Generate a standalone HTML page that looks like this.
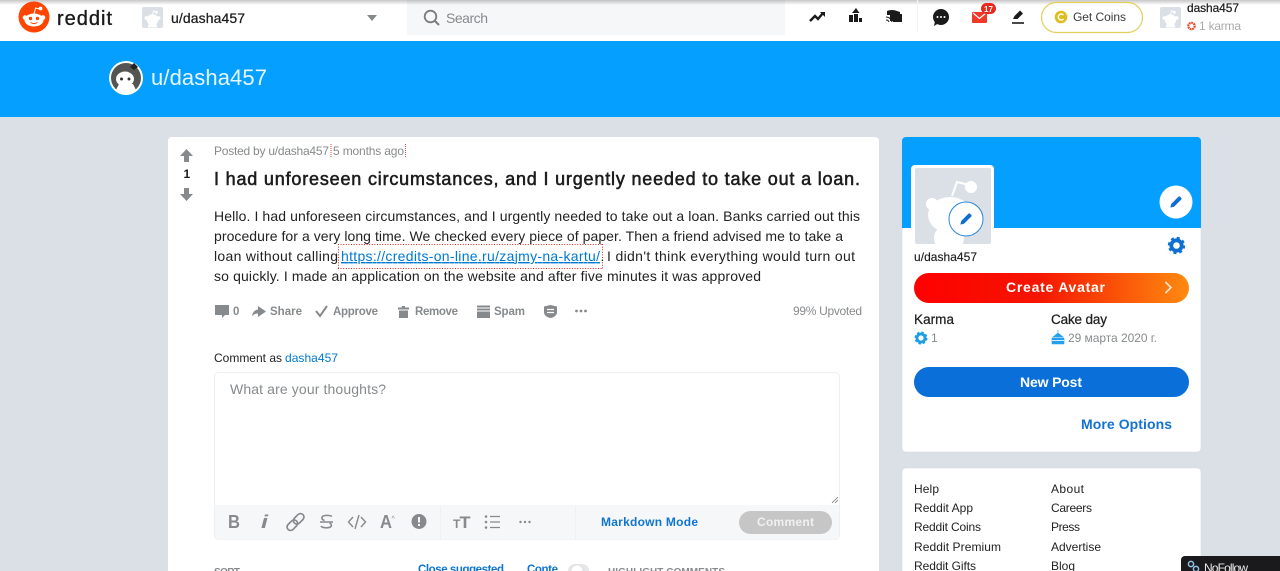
<!DOCTYPE html>
<html lang="en"><head><meta charset="utf-8"><title>u/dasha457</title>
<style>
html,body{margin:0;padding:0;width:1280px;height:571px;overflow:hidden;background:#dae0e6}
svg{display:block}
text{font-family:"Liberation Sans","Noto Sans CJK SC",sans-serif;font-size:12px;fill:#1c1c1c}
.b{font-size:14px;fill:#222}
.g{fill:#878a8c}
.a{font-weight:700;font-size:11.5px;fill:#878a8c}
.l{fill:#222}
.m{stroke:#222;stroke-width:.25}
</style></head><body>
<svg xmlns="http://www.w3.org/2000/svg" width="1280" height="571" viewBox="0 0 1280 571">
<defs>
<linearGradient id="top" x1="0" y1="0" x2="0" y2="1"><stop offset="0" stop-color="#000" stop-opacity=".22"/><stop offset="1" stop-color="#000" stop-opacity="0"/></linearGradient>
<linearGradient id="av" x1="0" y1="0" x2="1" y2="0"><stop offset="0" stop-color="#f00"/><stop offset=".45" stop-color="#f51500"/><stop offset="1" stop-color="#ff8a10"/></linearGradient>
<symbol id="snoo" viewBox="0 0 20 20"><g fill="#fff"><circle cx="10" cy="12" r="6"/><circle cx="3.6" cy="10" r="2"/><circle cx="16.4" cy="10" r="2"/><circle cx="14" cy="4" r="1.6"/><path d="M10 7 11 2.6 14 3.6" fill="none" stroke="#fff" stroke-width=".9"/><path d="M5 21C5 16 7 15 10 15s5 1 5 6z"/></g></symbol>
<symbol id="pen" viewBox="0 0 20 20"><path d="M3 17l1-4.500L13 3.500a1.500 1.500 0 0 1 2.100 0l1.400 1.400a1.500 1.500 0 0 1 0 2.100L7.500 16z" fill="#0f6fd0"/></symbol>
</defs>

<rect width="1280" height="571" fill="#dae0e6"/>

<!-- nav -->
<rect width="1280" height="41" fill="#fff"/>
<rect x="407" y="0" width="378" height="35" fill="#f6f7f8"/>
<rect width="1280" height="5" fill="url(#top)"/>
<circle cx="34" cy="17" r="15.500" fill="#ff4500"/>
<g fill="#fff">
<ellipse cx="34" cy="20" rx="9.500" ry="6.500"/><circle cx="25" cy="17.500" r="2.300"/><circle cx="43" cy="17.500" r="2.300"/><circle cx="40.500" cy="8.500" r="1.900"/>
<path d="M34 14l1.600-6 4 1" fill="none" stroke="#fff" stroke-width="1"/>
</g>
<circle cx="30.500" cy="18.500" r="1.700" fill="#ff4500"/><circle cx="37.500" cy="18.500" r="1.700" fill="#ff4500"/>
<path d="M30.500 22.500q3.500 2.300 7 0" fill="none" stroke="#ff4500" stroke-width="1"/>
<text x="57" y="25" textLength="55" lengthAdjust="spacing" style="font-size:20px;fill:#1a1a1b" stroke="#1a1a1b" stroke-width=".35">reddit</text>

<rect x="142" y="7" width="21" height="21" rx="2" fill="#dae0e6"/>
<svg x="143" y="8" width="19" height="20" viewBox="0 0 20 20"><use href="#snoo"/></svg>
<text x="171" y="23" textLength="74" lengthAdjust="spacing" class="m" style="font-size:14px">u/dasha457</text>
<path d="M367 15h10l-5 6z" fill="#878a8c"/>

<circle cx="430.500" cy="16.500" r="5.800" fill="none" stroke="#7c7c7c" stroke-width="1.800"/><path d="M435 21l4 4" stroke="#7c7c7c" stroke-width="2"/>
<text x="446" y="23" textLength="42" lengthAdjust="spacing" class="b" style="fill:#878a8c">Search</text>

<path d="M810 21l5-5 3 3 5-6" fill="none" stroke="#1a1a1b" stroke-width="2.400"/><path d="M820 12h5v5z" fill="#1a1a1b"/>
<path d="M849 15h4v7h-4zM854 14v8h4v-8zM859 18h3v4h-3zM852 13l4-5 3.500 5z" fill="#1a1a1b"/>
<path d="M887 11q5-2 10 0l3 1v9h-10v-6h-3z" fill="#1a1a1b"/><rect x="893" y="14" width="9" height="8" fill="#1a1a1b"/><path d="M886 17a6 6 0 0 1 6 5M886 20a3 3 0 0 1 3 2" fill="none" stroke="#1a1a1b" stroke-width="1"/>
<rect x="917" y="0" width="1" height="32" fill="#f3f4f5"/>
<circle cx="941" cy="17" r="8" fill="#1a1a1b"/><path d="M935 21l-1 5 5-3z" fill="#1a1a1b"/><circle cx="937.500" cy="17" r="1" fill="#fff"/><circle cx="941" cy="17" r="1" fill="#fff"/><circle cx="944.500" cy="17" r="1" fill="#fff"/>
<rect x="972" y="12" width="15" height="11" rx="1" fill="#ef3a2a"/><path d="M973 13l6.500 5.500L986 13" fill="none" stroke="#fff" stroke-width="1.200"/>
<rect x="981" y="3" width="15" height="11" rx="5.500" fill="#e8291c"/><text x="984" y="12" textLength="9" lengthAdjust="spacing" style="font-size:8px;fill:#fff;font-weight:700">17</text>
<path d="M1013 19l1.500-3 5.500-5.500 3 3-5.500 5.500z" fill="#1a1a1b"/><path d="M1012 23h12" stroke="#1a1a1b" stroke-width="1.600"/>
<rect x="1041.500" y="2.500" width="101" height="30" rx="15" fill="#fff" stroke="#e2cf5a" stroke-width="1.200"/>
<circle cx="1061" cy="17" r="6.300" fill="#dfbd1f"/><path d="M1063.500 15a3 3 0 1 0 0 4" fill="none" stroke="#fff" stroke-width="1.400"/>
<text x="1073" y="21" textLength="53" lengthAdjust="spacing" style="fill:#3a3a3a">Get Coins</text>
<rect x="1160" y="7" width="21" height="21" rx="2" fill="#dae0e6"/>
<svg x="1161" y="8" width="19" height="20" viewBox="0 0 20 20"><use href="#snoo"/></svg>
<text x="1187" y="12" textLength="52" lengthAdjust="spacing" class="m">dasha457</text>
<circle cx="1191.500" cy="26" r="3.200" fill="none" stroke="#e8492f" stroke-width="2.200" stroke-dasharray="1.800 .6"/>
<text x="1199" y="30" textLength="42" lengthAdjust="spacing" style="fill:#a8aaab">1 karma</text>

<!-- blue banner -->
<rect y="41" width="1280" height="76" fill="#049fff"/>
<circle cx="126" cy="78" r="17" fill="#fff"/>
<circle cx="126" cy="78" r="15" fill="#545452"/>
<path d="M116 90c2 2 6 3.500 10 3.500s8-1.500 10-3.500l-3-6h-14z" fill="#fff"/>
<ellipse cx="125" cy="79" rx="9" ry="7.500" fill="#fff"/><circle cx="121.500" cy="79" r="1.500" fill="#333"/><circle cx="129" cy="79" r="1.500" fill="#333"/>
<path d="M130 67l4-4 4 4-4 3z" fill="#222"/>
<text x="151" y="85" textLength="116" lengthAdjust="spacing" style="font-size:22px;fill:#e9f6ff">u/dasha457</text>

<!-- post card -->
<rect x="168" y="137" width="711" height="440" rx="4" fill="#fff"/>
<path d="M186.500 149l6.500 7h-4v6h-5v-6h-4z" fill="#878a8c"/>
<text x="183.500" y="178" textLength="6" lengthAdjust="spacing" style="font-weight:700;fill:#1a1a1b">1</text>
<path d="M186.500 201l6.500-7h-4v-6h-5v6h-4z" fill="#878a8c"/>

<text x="214" y="155" textLength="115" lengthAdjust="spacing" class="g">Posted by u/dasha457</text>
<path d="M331 144v14M405.500 144v14" stroke="#e24a3c" stroke-width="1" stroke-dasharray="1 1"/>
<text x="333" y="155" textLength="71" lengthAdjust="spacing" class="g">5 months ago</text>
<text x="214" y="185" textLength="646" lengthAdjust="spacing" style="font-size:18px;fill:#1c1c1c" stroke="#1c1c1c" stroke-width=".55">I had unforeseen circumstances, and I urgently needed to take out a loan.</text>

<text class="b" x="214" y="221" textLength="646" lengthAdjust="spacing">Hello. I had unforeseen circumstances, and I urgently needed to take out a loan. Banks carried out this</text>
<text class="b" x="214" y="241" textLength="629" lengthAdjust="spacing">procedure for a very long time. We checked every piece of paper. Then a friend advised me to take a</text>
<text class="b" x="214" y="261" textLength="124" lengthAdjust="spacing">loan without calling</text>
<text class="b" x="341" y="261" textLength="259" lengthAdjust="spacing" text-decoration="underline" style="fill:#0079d3">https://credits-on-line.ru/zajmy-na-kartu/</text>
<path d="M338 244.500h265M338 268.500h265M338.500 244v25M602.500 244v25" fill="none" stroke="#d8281c" stroke-width="1" stroke-dasharray="1 1.600"/>
<text class="b" x="600.500" y="261">.</text>
<text class="b" x="607" y="261" textLength="248" lengthAdjust="spacing">I didn't think everything would turn out</text>
<text class="b" x="214" y="281" textLength="547" lengthAdjust="spacing">so quickly. I made an application on the website and after five minutes it was approved</text>

<!-- actions -->
<path d="M215 305h14v10h-4l-3 3v-3h-7z" fill="#878a8c"/>
<text x="233" y="315" textLength="7" lengthAdjust="spacing" class="a">0</text>
<path d="M258 306l8 5.500-8 5.500v-3.500c-3 0-4.500 1-6 3 .5-4 2.500-6.500 6-7z" fill="#878a8c"/>
<text x="270" y="315" textLength="32" lengthAdjust="spacing" class="a">Share</text>
<path d="M316 311l4 5 7-10" fill="none" stroke="#878a8c" stroke-width="2"/>
<text x="333" y="315" textLength="45" lengthAdjust="spacing" class="a">Approve</text>
<path d="M398 307.500h11v2h-11zM399 310.500h9V318h-9zM402 306h3v1.500h-3z" fill="#878a8c"/>
<text x="415" y="315" textLength="43" lengthAdjust="spacing" class="a">Remove</text>
<path d="M477 305.500h13v2h-13zM477 308.500h13v2h-13zM477 311.500h13v6.500h-13z" fill="#878a8c"/>
<text x="494" y="315" textLength="31" lengthAdjust="spacing" class="a">Spam</text>
<path d="M544 306.500l6.500-1.500 6.500 1.500v6c0 3-3.500 5-6.500 5.500-3-.5-6.500-2.500-6.500-5.500z" fill="#878a8c"/><path d="M547 309.500h7M547 312.500h7" stroke="#fff" stroke-width="1.200"/>
<g fill="#878a8c"><circle cx="576.500" cy="311" r="1.400"/><circle cx="581" cy="311" r="1.400"/><circle cx="585.500" cy="311" r="1.400"/></g>
<text x="793" y="315" textLength="69" lengthAdjust="spacing" class="g">99% Upvoted</text>

<text x="214" y="362" textLength="68" lengthAdjust="spacing" style="fill:#222">Comment as</text>
<text x="285" y="362" textLength="53" lengthAdjust="spacing" style="fill:#0079d3">dasha457</text>

<!-- editor -->
<rect x="214.500" y="372.500" width="625" height="167" rx="4" fill="#fff" stroke="#edeff1"/>
<path d="M215 505h624v31a3.500 3.500 0 0 1-3.500 3.500h-617a3.500 3.500 0 0 1-3.500-3.500z" fill="#f6f7f8"/>
<text x="230" y="394" textLength="156" lengthAdjust="spacing" class="b" style="fill:#878a8c">What are your thoughts?</text>
<path d="M832 503l6-6M835 503l3-3" stroke="#777" stroke-width=".8"/>

<g fill="#878a8c" stroke="none">
<text x="228" y="528" style="font-size:18px;font-weight:700;fill:#878a8c" textLength="12" lengthAdjust="spacingAndGlyphs">B</text>
<text x="261" y="528" style="font-size:18px;font-weight:700;font-style:italic;fill:#878a8c" textLength="7" lengthAdjust="spacingAndGlyphs">i</text>
<g transform="rotate(-45 295.500 522)" fill="none" stroke="#878a8c" stroke-width="1.700"><rect x="285" y="518.500" width="12" height="7" rx="3.500"/><rect x="294" y="518.500" width="12" height="7" rx="3.500"/></g>
<path d="M320 522h13M332 516.500c-2-1.500-8-1.500-9.500 0-1.500 2 0 3.500 2 4M321 526c1 2 8 2.500 10 .5 1-1.500 0-3-1.500-3.500" fill="none" stroke="#878a8c" stroke-width="1.600"/>
<path d="M353 517l-4.500 5 4.500 5M361 517l4.500 5-4.500 5M359 515l-4 14" fill="none" stroke="#878a8c" stroke-width="1.400"/>
<text x="380" y="528" style="font-size:18px;font-weight:700;fill:#878a8c" textLength="12" lengthAdjust="spacingAndGlyphs">A</text>
<text x="391.500" y="521" style="font-size:7px;fill:#878a8c">^</text>
<circle cx="419" cy="521.500" r="7.500"/><path d="M418 517h2v5.500h-2zM418 524h2v2h-2z" fill="#f6f7f8"/>
<rect x="440" y="506" width="1" height="33" fill="#eff0f1"/>
<text x="453" y="528" style="font-size:12px;font-weight:700;fill:#878a8c">T</text>
<text x="459.500" y="528" style="font-size:17px;font-weight:700;fill:#878a8c" textLength="11" lengthAdjust="spacingAndGlyphs">T</text>
<circle cx="486" cy="516.500" r="1.300"/><circle cx="486" cy="522" r="1.300"/><circle cx="486" cy="527.500" r="1.300"/>
<path d="M490 516.500h10M490 522h10M490 527.500h10" stroke="#878a8c" stroke-width="1.300"/>
<circle cx="520.500" cy="522" r="1.200"/><circle cx="525" cy="522" r="1.200"/><circle cx="529.500" cy="522" r="1.200"/>
<rect x="575" y="506" width="1" height="33" fill="#eff0f1"/>
</g>
<text x="601" y="526" textLength="97" lengthAdjust="spacing" style="font-weight:700;fill:#0f75d0">Markdown Mode</text>
<rect x="739" y="511" width="93" height="23" rx="11.500" fill="#c6c6c6"/>
<text x="757" y="526" textLength="57" lengthAdjust="spacing" style="font-weight:700;fill:#f0f0f0">Comment</text>

<!-- bottom row -->
<text x="214" y="575" textLength="26" lengthAdjust="spacing" style="font-size:10px;font-weight:700;fill:#878a8c">SORT</text>
<text x="418" y="573" textLength="86" lengthAdjust="spacing" style="font-size:11.5px;font-weight:700;fill:#0f75d0">Close suggested</text>
<text x="527" y="573" textLength="31" lengthAdjust="spacing" style="font-size:11.5px;font-weight:700;fill:#0f75d0">Conte</text>
<rect x="568" y="564" width="21" height="14" rx="7" fill="#e4e6e8"/><circle cx="577" cy="571" r="6" fill="#fff" stroke="#e0e2e4"/>
<text x="608" y="575" textLength="117" lengthAdjust="spacing" style="font-size:10px;font-weight:700;fill:#878a8c">HIGHLIGHT COMMENTS</text>

<!-- sidebar card 1 -->
<rect x="902" y="137" width="299" height="315" rx="4" fill="#fff" stroke="#d5d8db" stroke-width=".5"/>
<path d="M902 228v-87a4 4 0 0 1 4-4h291a4 4 0 0 1 4 4v87z" fill="#049fff"/>
<path d="M911 247v-78a4 4 0 0 1 4-4h75a4 4 0 0 1 4 4v78z" fill="#fff"/>
<rect x="915" y="168" width="76" height="76" rx="2" fill="#dae0e6"/>
<svg x="915" y="168" width="76" height="76" viewBox="0 0 76 76" overflow="hidden">
<g fill="#fff"><ellipse cx="35" cy="47" rx="22" ry="18"/><circle cx="17" cy="36" r="6"/><circle cx="56" cy="19" r="6"/><ellipse cx="34" cy="70" rx="15" ry="14"/><path d="M37 28l5-14 12 3" fill="none" stroke="#fff" stroke-width="2"/></g></svg>
<circle cx="966" cy="219" r="17" fill="#fff" stroke="#2a86d8" stroke-width="1"/>
<svg x="958" y="211" width="16" height="16" viewBox="0 0 20 20"><use href="#pen"/></svg>
<circle cx="1176" cy="202" r="16.500" fill="#fff"/>
<svg x="1168" y="194" width="16" height="16" viewBox="0 0 20 20"><use href="#pen"/></svg>
<circle cx="1176.500" cy="245.500" r="5.200" fill="none" stroke="#0f6fd0" stroke-width="3.800"/>
<circle cx="1176.500" cy="245.500" r="7.500" fill="none" stroke="#0f6fd0" stroke-width="2.400" stroke-dasharray="3 2.890"/>
<text x="914" y="261" textLength="63" lengthAdjust="spacing" class="m" style="stroke-width:.15">u/dasha457</text>
<rect x="914" y="273" width="275" height="30" rx="15" fill="url(#av)"/>
<text x="1006" y="292" textLength="99" lengthAdjust="spacing" style="font-size:14px;font-weight:700;fill:#fff">Create Avatar</text>
<path d="M1165.500 282l5.500 5.500-5.500 5.500" fill="none" stroke="#ffe9cf" stroke-width="1.600"/>
<text x="914" y="324" textLength="40" lengthAdjust="spacing" class="m" style="font-size:13.5px;fill:#222">Karma</text>
<text x="1051" y="324" textLength="56" lengthAdjust="spacing" class="m" style="font-size:13.5px;fill:#222">Cake day</text>
<circle cx="921" cy="338" r="4" fill="none" stroke="#1d9ce8" stroke-width="2.800"/>
<circle cx="921" cy="338" r="5.700" fill="none" stroke="#1d9ce8" stroke-width="1.600" stroke-dasharray="2.500 2"/>
<text x="931" y="342" textLength="6" lengthAdjust="spacing" class="g">1</text>
<path d="M1052 338h12v6h-12zM1053 337l5-4 5 4zM1058 330v3" fill="#24a0ed" stroke="#24a0ed" stroke-width=".6"/>
<path d="M1052 340.500h12" stroke="#fff" stroke-width=".8"/>
<text x="1068" y="342" textLength="89" lengthAdjust="spacing" class="g">29 марта 2020 г.</text>
<rect x="914" y="367" width="275" height="30" rx="15" fill="#0a6fd8"/>
<text x="1020" y="387" textLength="62" lengthAdjust="spacing" style="font-size:14px;font-weight:700;fill:#fff">New Post</text>
<text x="1081" y="429" textLength="91" lengthAdjust="spacing" style="font-size:14px;font-weight:700;fill:#1473d2">More Options</text>

<!-- sidebar card 2 -->
<rect x="902" y="468" width="299" height="120" rx="4" fill="#fff" stroke="#d5d8db" stroke-width=".5"/>
<text class="l" x="914" y="493" textLength="25" lengthAdjust="spacing">Help</text>
<text class="l" x="914" y="512" textLength="59" lengthAdjust="spacing">Reddit App</text>
<text class="l" x="914" y="531" textLength="67" lengthAdjust="spacing">Reddit Coins</text>
<text class="l" x="914" y="551" textLength="87" lengthAdjust="spacing">Reddit Premium</text>
<text class="l" x="914" y="570" textLength="62" lengthAdjust="spacing">Reddit Gifts</text>
<text class="l" x="1051" y="493" textLength="33" lengthAdjust="spacing">About</text>
<text class="l" x="1051" y="512" textLength="41" lengthAdjust="spacing">Careers</text>
<text class="l" x="1051" y="531" textLength="29" lengthAdjust="spacing">Press</text>
<text class="l" x="1051" y="551" textLength="50" lengthAdjust="spacing">Advertise</text>
<text class="l" x="1051" y="570" textLength="24" lengthAdjust="spacing">Blog</text>

<!-- NoFollow -->
<rect x="1181" y="556" width="110" height="30" rx="4" fill="#1a1a1c"/>
<circle cx="1191" cy="564" r="2.600" fill="none" stroke="#8fc0e8" stroke-width="1.500"/>
<circle cx="1196" cy="569" r="2.600" fill="none" stroke="#8fc0e8" stroke-width="1.500"/>
<text x="1204" y="572" textLength="44" lengthAdjust="spacing" style="fill:#e8e8e8">NoFollow</text>
</svg>
</body></html>
